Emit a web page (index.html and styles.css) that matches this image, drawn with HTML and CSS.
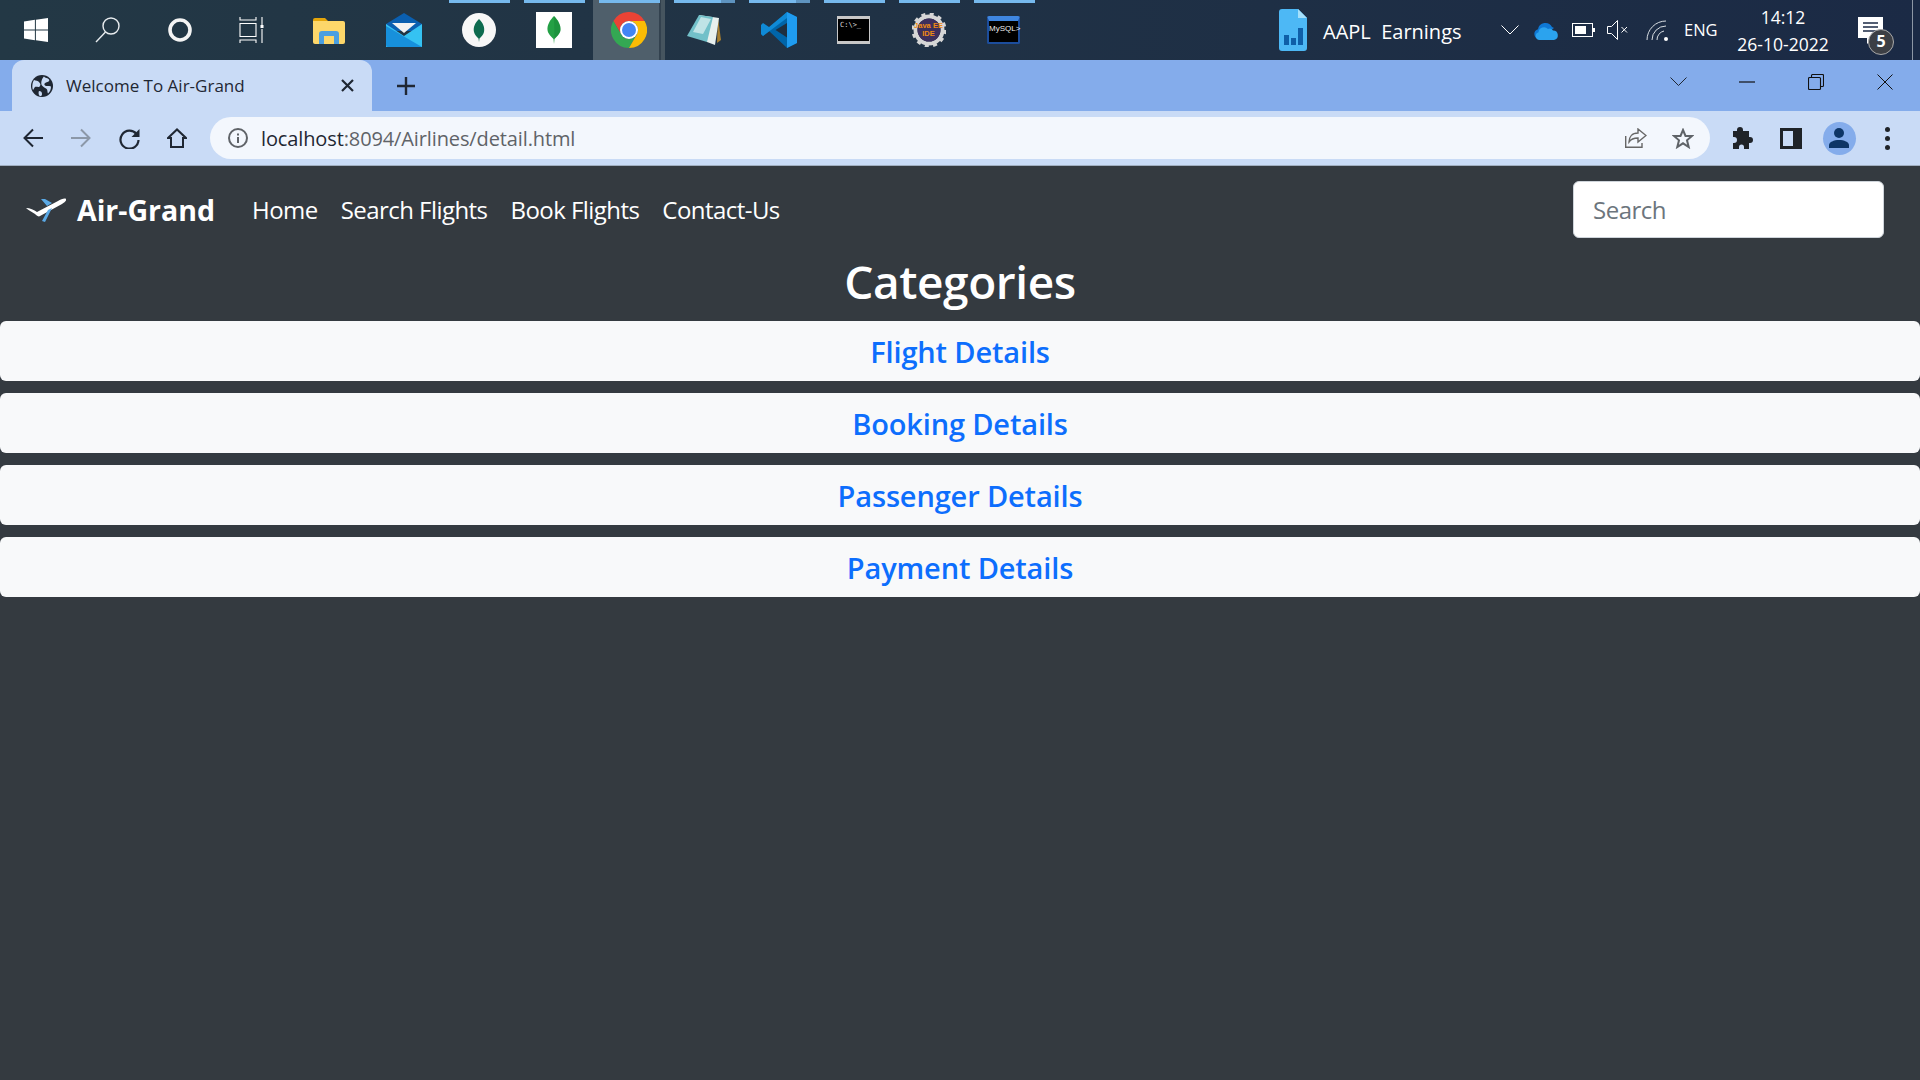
FILE: index.html
```html
<!DOCTYPE html>
<html lang="en">
<head>
<meta charset="utf-8">
<title>Welcome To Air-Grand</title>
<link rel="stylesheet" href="styles.css">
</head>
<body>
<div class="taskbar">
  <div class="tb-sys">
    <div class="tb-sys-item"><svg width="24" height="24" viewBox="0 0 24 24"><path fill="#fff" d="M0 3.4 10.9 1.8V11.5H0ZM11.9 1.7 24 0V11.5H11.9ZM0 12.5H10.9V22.2L0 20.6ZM11.9 12.5H24V24L11.9 22.3Z"/></svg></div>
    <div class="tb-sys-item"><svg width="26" height="26" viewBox="0 0 26 26" fill="none" stroke="#e8ecef" stroke-width="1.4"><circle cx="16" cy="9" r="8"/><path d="M10.5 15 1 25"/></svg></div>
    <div class="tb-sys-item"><svg width="26" height="26" viewBox="0 0 26 26" fill="none"><circle cx="13" cy="13" r="10" stroke="#f4f4f4" stroke-width="3.6"/></svg></div>
    <div class="tb-sys-item"><svg width="26" height="26" viewBox="0 0 26 26" fill="none" stroke="#fff" stroke-width="1.1"><path d="M1 0V3H17V0M1 6.5H17V19.5H1ZM1 26V23H17V26M23 0V8M23 12V26"/><rect x="21.5" y="8" width="3" height="3" fill="#fff" stroke="none"/></svg></div>
  </div>
  <div class="tb-apps">
    <div class="tb-app"><svg width="34" height="30" viewBox="0 0 34 30"><path fill="#e5a50a" d="M1 5a2 2 0 0 1 2-2h10l3 3H1Z"/><path fill="#fdd76a" d="M1 6h30a2 2 0 0 1 2 2v19a2 2 0 0 1-2 2H3a2 2 0 0 1-2-2Z"/><path fill="#4a9fe0" d="M7 29V19a3 3 0 0 1 3-3h14a3 3 0 0 1 3 3v10h-5v-8H12v8Z"/></svg></div>
    <div class="tb-app"><svg width="36" height="34" viewBox="0 0 36 34"><path fill="#0a5fb0" d="M18 0 36 11V18H0V11Z"/><path fill="#f2f2f2" d="M6 10H30L18 20Z"/><path fill="#35c2f2" d="M0 11 18 23 36 11V34H0Z"/><path fill="#1790dc" d="M0 13 36 34H2a2 2 0 0 1-2-2Z"/></svg></div>
    <div class="tb-app"><svg width="34" height="34" viewBox="0 0 34 34"><circle cx="17" cy="17" r="17" fill="#f7f7f7"/><path fill="#0d6b4f" d="M17 6c4 4 6 8 5 13-.6 3-3 5-4.500 6.500L17 29l-.5-3.500C15 24 12.600 22 12 19c-1-5 1-9 5-13Z"/></svg></div>
    <div class="tb-app"><div class="leaf-box"><svg width="14" height="28" viewBox="0 0 14 28"><path fill="#23a045" d="M7 0c4 4 7 9 6.500 14C13 18 10 20 7.500 23L7 28l-.5-5C4 20 1 18 .5 14 0 9 3 4 7 0Z"/><path fill="#117a32" d="M7 0c4 4 7 9 6.500 14C13 18 10 20 7.500 23Z" opacity=".35"/></svg></div></div>
    <div class="tb-app tb-active"><svg width="36" height="36" viewBox="6 6 36 36"><path fill="#ea4335" d="M39.600 15A18 18 0 0 0 8.400 15L16.200 28.500A9 9 0 0 1 24 15Z"/><path fill="#34a853" d="M8.400 15A18 18 0 0 0 24 42L31.800 28.500A9 9 0 0 1 16.200 28.500Z"/><path fill="#fbbc05" d="M24 42A18 18 0 0 0 39.600 15H24A9 9 0 0 1 31.800 28.500Z"/><circle cx="24" cy="24" r="9" fill="#fff"/><circle cx="24" cy="24" r="7" fill="#4285f4"/></svg></div>
    <div class="tb-app"><svg width="34" height="32" viewBox="0 0 34 32"><path fill="#a87f30" d="M31 4 34 26 30 29Z"/><path fill="#e8f0ee" d="M12 1 32 4 28 31 20 28Z"/><path fill="#72c0c9" d="M12 1 26 3 20 28 0 22Z"/><path fill="#bfe3e6" d="M14 3 24 5 16 20 6 18Z"/></svg></div>
    <div class="tb-app"><svg width="36" height="36" viewBox="0 0 36 36"><path fill="#0065a9" d="M26 0 36 5V31L26 36 8 19 2 24 0 22V14L2 12 8 17Z"/><path fill="#0f8ad6" d="M0 22 2 24 26 6V0L8 15 2 11 0 13Z"/><path fill="#1f9cf0" d="M26 0 36 5V31L26 36Z"/><path fill="#1e2f40" d="M26 11 14.500 18 26 25.500Z"/></svg></div>
    <div class="tb-app"><div class="cmd"><span class="cmd-text">C:\&gt;_</span></div></div>
    <div class="tb-app"><div class="gear"><svg width="34" height="34" viewBox="0 0 34 34"><circle cx="17" cy="17" r="13.500" fill="none" stroke="#d6d6d6" stroke-width="4"/><circle cx="17" cy="17" r="16" fill="none" stroke="#d6d6d6" stroke-width="3" stroke-dasharray="4 4.400"/><circle cx="17" cy="17" r="11.500" fill="#3d2f5c"/></svg><span class="gear-text">Java EE<br>IDE</span></div></div>
    <div class="tb-app"><div class="mysql"><span>MySQL&gt;</span></div></div>
  </div>
  <div class="tb-spacer"></div>
  <div class="tb-tray">
    <svg class="tray-stock" width="28" height="42" viewBox="0 0 28 42"><path fill="#4db8f5" d="M3 0H19L28 9V39a3 3 0 0 1-3 3H3a3 3 0 0 1-3-3V3a3 3 0 0 1 3-3Z"/><path fill="#a5e0fb" d="M19 0 28 9H19Z"/><rect x="5" y="26" width="5" height="10" fill="#0f5fa8"/><rect x="12" y="29" width="5" height="7" fill="#0f5fa8"/><rect x="19" y="19" width="5" height="17" fill="#0f5fa8"/></svg>
    <span class="tray-news">AAPL&nbsp; Earnings</span>
    <svg class="tray-chev" width="18" height="10" viewBox="0 0 18 10" fill="none" stroke="#fff" stroke-width="1"><path d="M.5.5 9 9 17.500.5"/></svg>
    <svg class="tray-cloud" width="25" height="19" viewBox="0 0 25 19"><path fill="#0f78d4" d="M5 18a5 5 0 0 1-1-9.800A7.500 7.500 0 0 1 18 6a5 5 0 0 1 2 1Z"/><path fill="#2ba3ee" d="M5.500 19a4 4 0 0 1-1-7.800A5.500 5.500 0 0 1 14 8a4 4 0 0 1 5 1.500 4.800 4.800 0 0 1 1 9.500Z"/></svg>
    <svg class="tray-batt" width="23" height="14" viewBox="0 0 23 14"><rect x=".5" y=".5" width="20" height="13" fill="none" stroke="#fff"/><rect x="3" y="3" width="11" height="8" fill="#fff"/><rect x="21" y="5" width="2" height="4" fill="#fff"/></svg>
    <svg class="tray-vol" width="22" height="20" viewBox="0 0 22 20" fill="none" stroke="#fff" stroke-width="1"><path d="M.5 6.500H4.500L10.500.5V19.500L4.500 13.500H.5ZM14.500 7 20 12.500M20 7 14.500 12.500"/></svg>
    <svg class="tray-wifi" width="23" height="21" viewBox="0 0 23 21" fill="none" stroke="#d8dde2" stroke-width="1"><path d="M1 20A19 19 0 0 1 20 1M6 20A14 14 0 0 1 20 6M11 20A9 9 0 0 1 18 11"/><circle cx="20" cy="19" r="2" fill="#fff" stroke="none"/></svg>
    <span class="tray-lang">ENG</span>
    <div class="tray-clock"><span>14:12</span><span>26-10-2022</span></div>
    <div class="tray-notif">
      <svg width="26" height="30" viewBox="0 0 26 30"><path fill="#fff" d="M0 0H25V21H15L9 27V21H0Z"/><path stroke="#1b2a45" stroke-width="1.500" d="M5 6H20M5 10H20M5 14H20"/></svg>
      <span class="notif-badge">5</span>
    </div>
  </div>
</div>

<div class="tabstrip">
  <div class="tab">
    <svg class="tab-globe" width="22" height="22" viewBox="0 0 22 22"><circle cx="11" cy="11" r="11" fill="#1f2733"/><path fill="#c9dbf6" d="M3 5c2 1 4 .5 5 2s2 2 1 4-4 0-5 1-1 2-2 3C1 13 1 8 3 5ZM13 1.500c1 2 4 1 5 3s-1 2-3 3-2 2-1 3 4 0 6 1c0 3-1 5-3 7-1-2 0-4-2-5s-3-2-4-3-1-4 0-6 1-2 2-3ZM8 16c2 0 3 1 3 3s-1 2-2 2-2-3-1-5Z"/></svg>
    <span class="tab-title">Welcome To Air-Grand</span>
    <svg class="tab-close" width="13" height="13" viewBox="0 0 13 13" stroke="#1f2733" stroke-width="2.200"><path d="M1 1 12 12M12 1 1 12"/></svg>
  </div>
  <svg class="tab-new" width="18" height="18" viewBox="0 0 18 18" stroke="#1f2733" stroke-width="2.400"><path d="M9 0V18M0 9H18"/></svg>
  <div class="tb-spacer"></div>
  <div class="winctrl">
    <svg class="win-chev" width="17" height="10" viewBox="0 0 17 10" fill="none" stroke="#1f2733"><path d="M.5.5 8.500 8.500 16.500.5"/></svg>
    <svg class="win-min" width="16" height="2" viewBox="0 0 16 2" stroke="#111" stroke-width="1.200"><path d="M0 1H16"/></svg>
    <svg class="win-max" width="16" height="16" viewBox="0 0 16 16" fill="none" stroke="#111" stroke-width="1.100"><rect x=".5" y="3.500" width="12" height="12" rx="1"/><path d="M3.500 3.500V1.500a1 1 0 0 1 1-1H14.500a1 1 0 0 1 1 1V11.500a1 1 0 0 1-1 1H12.500"/></svg>
    <svg class="win-close" width="16" height="16" viewBox="0 0 16 16" stroke="#111" stroke-width="1"><path d="M.5.5 15.500 15.500M15.500.5 .5 15.500"/></svg>
  </div>
</div>

<div class="toolbar">
  <div class="tool-btn"><svg width="20" height="20" viewBox="0 0 20 20" fill="none" stroke="#1f2733" stroke-width="2"><path d="M20 10H2M10 1.500 1.500 10 10 18.500"/></svg></div>
  <div class="tool-btn"><svg width="20" height="20" viewBox="0 0 20 20" fill="none" stroke="#8c98a8" stroke-width="2"><path d="M0 10H18M10 1.500 18.500 10 10 18.500"/></svg></div>
  <div class="tool-btn"><svg width="21" height="21" viewBox="0 0 21 21" fill="none"><path stroke="#1f2733" stroke-width="2.200" d="M17.500 6A9 9 0 1 0 19.500 12"/><path fill="#1f2733" d="M20.500 1V9H12.500Z"/></svg></div>
  <div class="tool-btn"><svg width="20" height="20" viewBox="0 0 20 20" fill="none" stroke="#1f2733" stroke-width="2"><path d="M1 10 10 1.500 19 10H16V19H4V10Z"/></svg></div>
  <div class="omnibox">
    <svg class="omni-info" width="20" height="20" viewBox="0 0 20 20" fill="none"><circle cx="10" cy="10" r="9" stroke="#5f6368" stroke-width="2"/><rect x="9" y="9" width="2" height="6" fill="#5f6368"/><rect x="9" y="5.500" width="2" height="2" fill="#5f6368"/></svg>
    <span class="url"><span class="url-host">localhost</span>:8094/Airlines/detail.html</span>
    <div class="tb-spacer"></div>
    <svg class="omni-share" width="22" height="20" viewBox="0 0 22 20" fill="none" stroke="#666" stroke-width="1.400"><path d="M.7 8V19.300H17V15"/><path d="M13 1V5C7 5 4 9 4 14C6 11 9 10 13 10V14L21 7.500Z"/></svg>
    <svg class="omni-star" width="22" height="21" viewBox="0 0 22 21" fill="none" stroke="#5f6368" stroke-width="2"><path d="M11 2 13.500 8H20L15 12.300 16.700 19 11 15.300 5.300 19 7 12.300 2 8H8.500Z"/></svg>
  </div>
  <div class="tool-btn"><svg width="22" height="22" viewBox="0 0 22 22"><path fill="#1f2328" d="M8 0a3 3 0 0 1 3 3v1h6v6h1a3 3 0 0 1 0 6h-1v6h-5v-2a2.500 2.500 0 0 0-5 0v2H1v-6h1a3 3 0 0 0 0-6H1V4h4V3a3 3 0 0 1 3-3Z"/></svg></div>
  <div class="tool-btn"><svg width="22" height="21" viewBox="0 0 22 21"><path fill="#1f2328" fill-rule="evenodd" d="M0 0H22V21H0ZM3 3V18H13V3Z"/></svg></div>
  <div class="tool-btn"><div class="avatar"><svg width="20" height="20" viewBox="0 0 20 20"><circle cx="10" cy="5" r="5" fill="#0d3566"/><path fill="#0d3566" d="M0 20v-3c0-3 5-5 10-5s10 2 10 5v3Z"/></svg></div></div>
  <div class="tool-btn"><div class="kebab"><i></i><i></i><i></i></div></div>
</div>

<div class="page">
  <nav class="navbar">
    <a class="brand">
      <svg width="40" height="24" viewBox="0 0 40 24"><path fill="#fff" d="M0 10c4 0 8 2 11 4L32 3c3-2 7-3 8-2s-1 3-4 5L14 18c-1 1-3 0-5-2-3-2-7-4-9-6Z"/><path fill="#5aa9e6" d="M15 1 19 1 26 5 21 8ZM22 12 26 10 19 24 16 23Z"/></svg>
      <span>Air-Grand</span>
    </a>
    <ul class="nav-links">
      <li>Home</li>
      <li>Search Flights</li>
      <li>Book Flights</li>
      <li>Contact-Us</li>
    </ul>
    <input class="search" type="search" placeholder="Search">
  </nav>
  <h1 class="title">Categories</h1>
  <div class="cards">
    <a class="card">Flight Details</a>
    <a class="card">Booking Details</a>
    <a class="card">Passenger Details</a>
    <a class="card">Payment Details</a>
  </div>
</div>
</body>
</html>
```
FILE: styles.css
```css
* { box-sizing: border-box; }
html, body { margin: 0; height: 100%; overflow: hidden; }
body {
  width: 1920px;
  height: 1080px;
  display: flex;
  flex-direction: column;
  font-family: "Open Sans", "Noto Sans", sans-serif;
  background: #343a40;
}
svg { display: block; flex: none; }
.tb-spacer { flex: 1; }

/* taskbar */
.taskbar {
  height: 60px;
  flex: none;
  display: flex;
  align-items: stretch;
  background: linear-gradient(90deg, #233845 0%, #203245 45%, #1b2a45 100%);
  color: #fff;
  position: relative;
}
.taskbar::after {
  content: "";
  position: absolute;
  right: 7px;
  top: 0;
  bottom: 0;
  width: 1px;
  background: #8d97a5;
}
.tb-sys { display: flex; padding-right: 3px; }
.tb-sys-item { width: 72px; display: flex; align-items: center; justify-content: center; }
.tb-apps { display: flex; }
.tb-app { width: 75px; display: flex; align-items: center; justify-content: center; position: relative; }
.tb-app:nth-child(n+3)::before {
  content: "";
  position: absolute;
  left: 8px;
  top: 0;
  width: 61px;
  height: 3px;
  background: #76b9ed;
}
.tb-app:nth-child(6)::before, .tb-app:nth-child(7)::before {
  background: linear-gradient(90deg, #76b9ed 77%, #5e93bf 77%);
}
.tb-active {
  background: linear-gradient(90deg, transparent 0, transparent 2px, #4f5f6b 2px, #4f5f6b 68px, #33424f 68px, #33424f 70px, #46555f 70px, #46555f 74px, transparent 74px);
}
.leaf-box { width: 36px; height: 36px; background: #fff; display: flex; align-items: center; justify-content: center; }
.cmd { width: 33px; height: 28px; background: #000; border: 1px solid #c8c8c8; border-top-width: 3px; border-bottom-width: 3px; position: relative; overflow: hidden; }
.cmd-text { display: block; font: 7px/9px "DejaVu Sans Mono", monospace; color: #ddd; padding: 2px 0 0 2px; }
.gear { width: 34px; height: 34px; position: relative; }
.gear-text {
  position: absolute;
  left: 0;
  right: 0;
  top: 9px;
  text-align: center;
  font: 700 7.500px/8px "Liberation Sans", sans-serif;
  color: #f08a12;
}
.mysql { width: 33px; height: 28px; background: #000; border: 2px solid #1c4d9c; border-top-width: 5px; border-top-color: #3f86e0; border-radius: 2px; }
.mysql span { display: block; font: 8px/12px "Liberation Sans", sans-serif; color: #eee; padding-top: 2px; white-space: nowrap; }
.tb-tray { display: flex; align-items: center; }
.tray-stock { margin-right: 16px; }
.tray-news { font-size: 20px; width: 178px; margin-top: 2px; white-space: nowrap; color: #fff; }
.tray-chev { margin-right: 15px; }
.tray-cloud { margin-right: 13px; }
.tray-batt { margin-right: 12px; }
.tray-vol { margin-right: 17px; }
.tray-wifi { margin-right: 15px; }
.tray-lang { font-size: 16.500px; width: 34px; margin-bottom: 2px; white-space: nowrap; }
.tray-clock {
  width: 130px;
  display: flex;
  flex-direction: column;
  align-items: center;
  gap: 5px;
  font-size: 17.500px;
  line-height: 22px;
}
.tray-notif { width: 72px; height: 60px; position: relative; padding: 17px 0 0 10px; }
.notif-badge {
  position: absolute;
  left: 20px;
  top: 29px;
  width: 26px;
  height: 26px;
  border-radius: 50%;
  background: #3c3f45;
  border: 1px solid #aaa;
  font-size: 16px;
  font-weight: 700;
  line-height: 23px;
  text-align: center;
}

/* tab strip */
.tabstrip {
  height: 51px;
  flex: none;
  display: flex;
  align-items: center;
  background: #84aceb;
  padding-left: 12px;
}
.tab {
  width: 360px;
  height: 51px;
  padding: 0 18px 0 19px;
  display: flex;
  align-items: center;
  background: #c9dbf6;
  border-radius: 12px 12px 0 0;
}
.tab-title { flex: 1; margin-left: 13px; font-size: 17px; color: #1f2733; white-space: nowrap; }
.tab-new { margin-left: 25px; }
.winctrl { display: flex; align-items: center; height: 100%; padding: 0 27px 8px 0; }
.win-chev { margin-right: 52px; }
.win-min { margin-right: 53px; }
.win-max { margin-right: 53px; }

/* toolbar */
.toolbar {
  height: 55px;
  flex: none;
  display: flex;
  align-items: center;
  padding: 0 9px;
  background: #c9dbf6;
  border-bottom: 1px solid #a0aec0;
}
.tool-btn { width: 48px; height: 48px; display: flex; align-items: center; justify-content: center; }
.omnibox {
  flex: 1;
  height: 42px;
  margin: 0 9px;
  padding: 0 16px 0 18px;
  display: flex;
  align-items: center;
  background: #f3f7fd;
  border-radius: 21px;
}
.url { margin-left: 13px; font-size: 20px; letter-spacing: -0.12px; color: #5f6368; white-space: nowrap; }
.url-host { color: #1f2733; }
.omni-star { margin-left: 25px; }
.avatar { width: 33px; height: 33px; border-radius: 50%; background: #84aceb; display: flex; align-items: center; justify-content: center; }
.kebab { display: flex; flex-direction: column; gap: 4px; }
.kebab i { display: block; width: 5px; height: 5px; border-radius: 50%; background: #1f2328; }

/* page */
.page { flex: 1; background: #343a40; color: #fff; }
.navbar {
  height: 87px;
  display: flex;
  align-items: center;
  padding: 0 36px 0 26px;
}
.brand { display: flex; align-items: center; gap: 11px; font-size: 28.500px; font-weight: 700; color: #fff; }
.nav-links { list-style: none; display: flex; gap: 23px; margin: 0 auto 0 37px; padding: 0; font-size: 24px; letter-spacing: -0.55px; }
.search {
  width: 311px;
  height: 57px;
  padding: 0 19px;
  border: 1.500px solid #ced4da;
  border-radius: 6px;
  background: #fff;
  font: 24px "Open Sans", sans-serif;
  letter-spacing: -0.5px;
  color: #212529;
}
.search::placeholder { color: #6c757d; opacity: 1; }
.title { margin: 0 0 12px; font-size: 46px; line-height: 56px; font-weight: 600; letter-spacing: -0.4px; text-align: center; }
.cards { display: flex; flex-direction: column; gap: 12px; }
.card {
  height: 60px;
  display: flex;
  align-items: center;
  justify-content: center;
  background: #f8f9fa;
  border-radius: 6px;
  font-size: 29px;
  font-weight: 600;
  letter-spacing: -0.15px;
  color: #0d6efd;
}
```
